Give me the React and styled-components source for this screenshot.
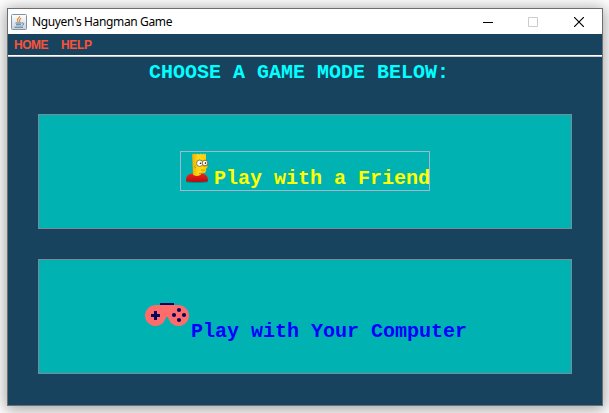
import React from 'react';
import styled, { createGlobalStyle } from 'styled-components';

const GlobalStyle = createGlobalStyle`
  * { box-sizing: border-box; }
  body { margin: 0; background: #fff; overflow: hidden; }
  svg { display: block; flex: none; }
`;

const Desktop = styled.div`
  width: 609px;
  height: 413px;
  padding: 8px 6px 7px 7px;
  overflow: hidden;
`;

const Window = styled.main`
  display: flex;
  flex-direction: column;
  width: 596px;
  height: 398px;
  border: 1px solid #6c6f72;
  background: #18435f;
  box-shadow: 0 2px 14px 2px rgba(0, 0, 0, 0.36);
`;

const TitleBar = styled.header`
  display: flex;
  align-items: center;
  height: 25px;
  padding-left: 3px;
  background: #fff;
`;

const Title = styled.h1`
  flex: 1;
  margin: 0 0 0 5px;
  color: #000;
  font: 400 12px/24px 'Noto Sans', sans-serif;
  letter-spacing: -0.36px;
  white-space: nowrap;
`;

const WindowButton = styled.button`
  display: flex;
  align-items: center;
  justify-content: center;
  width: ${(p) => p.$width || '46px'};
  height: 25px;
  padding: 0;
  border: 0;
  background: transparent;
`;

const MenuBar = styled.nav`
  display: flex;
  gap: 13px;
  height: 23px;
  padding-left: 6px;
  border-bottom: 1px solid #c9c9c9;
  box-shadow: inset 0 -1px #fff;
`;

const MenuItem = styled.span`
  width: ${(p) => p.$width};
  color: #fb5237;
  font: 700 12px/22px 'Liberation Sans', Arial, sans-serif;
  letter-spacing: ${(p) => p.$spacing};
`;

const Heading = styled.h2`
  height: 32px;
  margin: 0 0 25px;
  padding-right: 12px;
  color: #00ffff;
  font: 700 20px/32px 'Liberation Mono', 'Courier New', monospace;
  text-align: center;
  white-space: pre;
`;

const Modes = styled.section`
  display: flex;
  flex-direction: column;
  gap: 30px;
  padding: 0 30px;
`;

const ModePanel = styled.button`
  display: flex;
  justify-content: center;
  align-items: flex-start;
  width: 534px;
  height: 115px;
  padding: ${(p) => p.$pad};
  border: 1px solid #7a8a99;
  background: #00b2b2;
`;

const ModeContent = styled.span`
  display: flex;
  width: ${(p) => p.$width};
  height: 40px;
  border: 1px solid ${(p) => (p.$focused ? '#a3b8cc' : 'transparent')};
`;

const ModeLabel = styled.span`
  margin: ${(p) => p.$offset};
  color: ${(p) => p.$color};
  font: 700 20px/24px 'Liberation Mono', 'Courier New', monospace;
  white-space: pre;
`;

const JavaIcon = () => (
  <svg width="16" height="16" viewBox="0 0 16 16" fill="none">
    <defs>
      <linearGradient id="tile" x1="0" y1="0" x2="0" y2="1">
        <stop stopColor="#fff" />
        <stop offset="1" stopColor="#c9d3dc" />
      </linearGradient>
    </defs>
    <rect x=".5" y=".5" width="15" height="15" rx="1" fill="url(#tile)" stroke="#7c93a8" />
    <path d="M8.7 2c.5 2-3.4 2.6-2.2 4.6l.8 1.2M10.2 4.3C7.7 5.2 9.4 6.4 8.3 7.8" stroke="#e8872e" strokeWidth="1.2" />
    <path d="M4.5 9h6M5 10.8h5M3.5 13.2h8.5M10.8 9c3-.4 2.2 2.2 0 2.4" stroke="#4b7595" strokeWidth="1" />
  </svg>
);

const FriendIcon = () => (
  <svg width="33" height="38" viewBox="0 0 33 38">
    <defs>
      <linearGradient id="skin">
        <stop stopColor="#efae00" />
        <stop offset=".4" stopColor="#ffda16" />
        <stop offset="1" stopColor="#ffc90b" />
      </linearGradient>
      <linearGradient id="shirt" x1="0" y1="0" x2="0" y2="1">
        <stop stopColor="#f02218" />
        <stop offset="1" stopColor="#b80d10" />
      </linearGradient>
    </defs>
    <ellipse cx="16" cy="29.8" rx="11" ry="1" fill="#067d80" />
    <path d="M5 29.2c-.3-5 2.5-7.4 6.5-7.4h9c4 0 6.5 2.4 6.5 7.4-6 1-16 1-22 0Z" fill="url(#shirt)" />
    <path d="M11 1.5l1.2 1 1.3-1 1.5 1 1.4-1 1.6 1 1.4-1 1.6 1 1.3-1 1.5 1 1.2-1V13c1.8.3 2.2 2.6.3 3-.3 2 .4 4.6-2.3 5-1 .3-1.8.3-3 .3v1.3c-1.8 1.8-5.2 1.9-8 .2Z" fill="url(#skin)" />
    <path d="M20 17.8c1.5.6 3.2.5 4.3 0M14.5 13.5c-1.3.5-1 2.5.6 2.4M18 21.6c1.7-.2 3-.2 4.5-.6" fill="none" stroke="#b98200" strokeWidth=".7" />
    <circle cx="18.7" cy="11.2" r="3.2" fill="#fff" stroke="#6c5a20" strokeWidth=".8" />
    <circle cx="24" cy="11" r="2.8" fill="#fff" stroke="#6c5a20" strokeWidth=".8" />
    <path d="M22 14.1h3.4" stroke="#c28200" strokeWidth=".7" />
    <circle cx="19.5" cy="11.3" r=".8" fill="#111" />
    <circle cx="24.5" cy="11.1" r=".8" fill="#111" />
  </svg>
);

const GamepadIcon = () => (
  <svg width="46" height="38" viewBox="0 0 46 38">
    <path d="M15 3h14v2H15Z" fill="#07055c" />
    <path d="M10.5 5h23a10.5 10.5 0 1 1-9.8 14.2c-.5-1.8-.8-2.2-1.7-2.2s-1.2.4-1.7 2.2A10.5 10.5 0 1 1 10.5 5Z" fill="#ff6c6c" />
    <path d="M9 11h3v3h3v3h-3v3H9v-3H6v-3h3Z" fill="#07055c" />
    <g fill="#07055c">
      <circle cx="34" cy="10" r="2.1" />
      <circle cx="29" cy="15" r="2.1" />
      <circle cx="39" cy="15" r="2.1" />
      <circle cx="34" cy="20" r="2.1" />
    </g>
  </svg>
);

export default function App() {
  return (
    <>
      <GlobalStyle />
      <Desktop>
        <Window>
          <TitleBar>
            <JavaIcon />
            <Title>Nguyen's Hangman Game</Title>
            <WindowButton $width="44px" aria-label="Minimize">
              <svg width="10" height="10" viewBox="0 0 10 10"><path d="M0 5.5h10" stroke="#000" /></svg>
            </WindowButton>
            <WindowButton aria-label="Maximize">
              <svg width="10" height="10" viewBox="0 0 10 10"><path d="M.5.5h9v9h-9Z" fill="none" stroke="#ccc" /></svg>
            </WindowButton>
            <WindowButton aria-label="Close">
              <svg width="10" height="10" viewBox="0 0 10 10"><path d="M0 0l10 10M10 0L0 10" stroke="#000" strokeWidth="1.15" /></svg>
            </WindowButton>
          </TitleBar>
          <MenuBar>
            <MenuItem $width="34px" $spacing="-0.5px">HOME</MenuItem>
            <MenuItem $width="31px" $spacing="-0.3px">HELP</MenuItem>
          </MenuBar>
          <Heading>CHOOSE A GAME MODE BELOW:</Heading>
          <Modes>
            <ModePanel $pad="36px 0 0">
              <ModeContent $width="250px" $focused>
                <FriendIcon />
                <ModeLabel $color="#ffff00" $offset="15px 0 0">Play with a Friend</ModeLabel>
              </ModeContent>
            </ModePanel>
            <ModePanel $pad="39px 0 0 2px">
              <ModeContent $width="324px">
                <GamepadIcon />
                <ModeLabel $color="#0000ff" $offset="20px 0 0">Play with Your Computer</ModeLabel>
              </ModeContent>
            </ModePanel>
          </Modes>
        </Window>
      </Desktop>
    </>
  );
}
